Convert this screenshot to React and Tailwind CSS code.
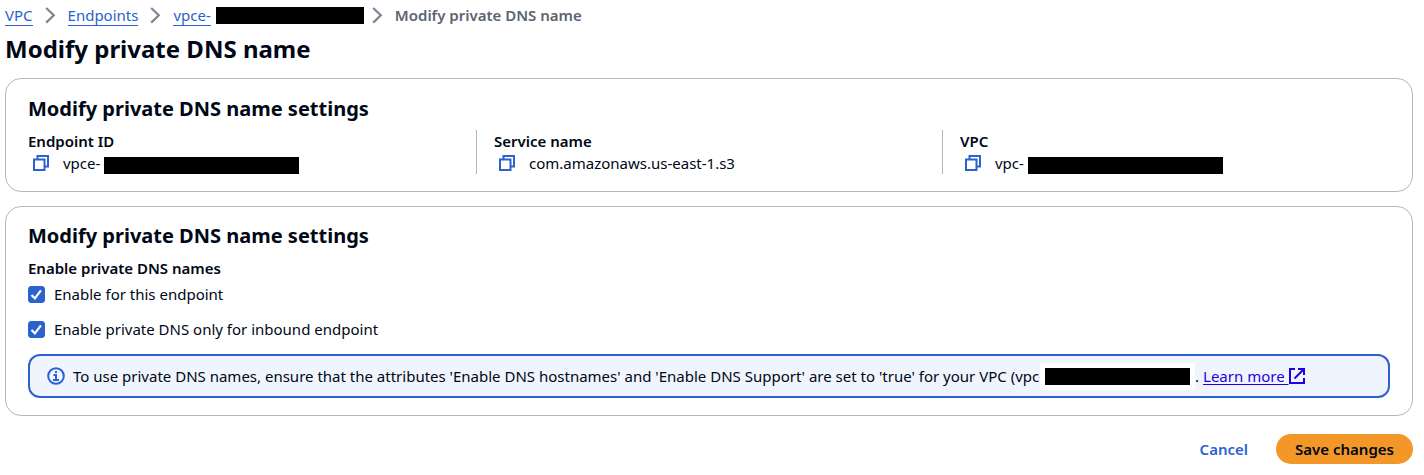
import React, { useState } from "react";

const ChevronIcon = () => (
  <svg width="11" height="17" viewBox="0 0 11 17" fill="none" aria-hidden="true" className="shrink-0">
    <path d="M1.2 1 8.8 8.3 1.2 15.6" stroke="#7d8594" strokeWidth="2.2" />
  </svg>
);

const CopyIcon = () => (
  <svg width="16" height="16" viewBox="0 0 16 16" fill="none" stroke="#2b63ce" strokeWidth="2" aria-hidden="true">
    <path d="M1 4.5h10.5V15H1z" />
    <path d="M4.5 4.5V1H15v10.5h-3.5" />
  </svg>
);

const InfoIcon = () => (
  <svg width="18" height="18" viewBox="0 0 18 18" fill="none" stroke="#2b63ce" strokeWidth="2" aria-hidden="true" className="shrink-0">
    <circle cx="9" cy="9" r="7.8" />
    <path d="M9 4v2M6.5 8H9v5M6 13h6" />
  </svg>
);

const ExternalIcon = () => (
  <svg width="16" height="16" viewBox="0 0 16 16" fill="none" stroke="currentColor" strokeWidth="2" aria-hidden="true" className="shrink-0">
    <path d="M6 1H1v14h14v-5" />
    <path d="M9 1h6v6M15 1 5.5 10.5" />
  </svg>
);

const Card = ({ title, className, children }) => (
  <section className={`rounded-2xl border border-[#b1b8c4] px-[22px] ${className}`}>
    <h2 className="text-xl font-bold leading-7">{title}</h2>
    {children}
  </section>
);

const Detail = ({ label, value, redacted }) => (
  <div className="border-l border-[#b1b8c4] px-[17px] first:border-transparent">
    <dt className="font-semibold leading-[22px]">{label}</dt>
    <dd className="flex h-[22px] items-center">
      <button type="button" aria-label={`Copy ${label}`} className="ml-[5px] mr-3.5 shrink-0">
        <CopyIcon />
      </button>
      <span>{value}</span>
      {redacted && <span className="ml-1 mt-1 h-[17px] w-[195px] bg-black" />}
    </dd>
  </div>
);

const Checkbox = ({ id, label, checked, onChange }) => (
  <div className="flex h-[22px] items-center gap-[9px]">
    <span className="relative flex h-[17px] w-[17px]">
      <input
        id={id}
        type="checkbox"
        checked={checked}
        onChange={onChange}
        className="h-[17px] w-[17px] appearance-none rounded-[3px] border border-[#2b63ce] bg-white checked:bg-[#2b63ce]"
      />
      {checked && (
        <svg viewBox="0 0 17 17" fill="none" aria-hidden="true" className="pointer-events-none absolute inset-0">
          <path d="m3.5 9 3.4 3.3 6-8" stroke="#fff" strokeWidth="2.2" />
        </svg>
      )}
    </span>
    <label htmlFor={id}>{label}</label>
  </div>
);

const App = () => {
  const [enabled, setEnabled] = useState(true);
  const [inboundOnly, setInboundOnly] = useState(true);

  const crumb = "border-b border-[#2b63ce] leading-[19px] text-[#2b63ce]";

  return (
    <main className="bg-white pl-[5px] pr-[11px] pt-[5px] font-['Noto_Sans',sans-serif] text-[15px] text-[#000716]">
      <nav aria-label="Breadcrumb" className="flex h-[21px] items-center">
        <a href="#vpc" className={crumb}>VPC</a>
        <span className="mx-3 flex"><ChevronIcon /></span>
        <a href="#endpoints" className={crumb}>Endpoints</a>
        <span className="mx-3 flex"><ChevronIcon /></span>
        <a href="#endpoint" className={crumb}>vpce-</a>
        <span className="ml-[5px] h-[17px] w-[148px] bg-black" />
        <span className="ml-2 mr-3 flex"><ChevronIcon /></span>
        <span className="font-semibold text-[#5b6472]">Modify private DNS name</span>
      </nav>

      <h1 className="mt-1.5 text-2xl font-bold leading-[34px]">Modify private DNS name</h1>

      <Card title="Modify private DNS name settings" className="mt-3 pb-[17px] pt-4">
        <dl className="-mx-[18px] mt-[7px] grid grid-cols-3">
          <Detail label="Endpoint ID" value="vpce-" redacted />
          <Detail label="Service name" value="com.amazonaws.us-east-1.s3" />
          <Detail label="VPC" value="vpc-" redacted />
        </dl>
      </Card>

      <Card title="Modify private DNS name settings" className="mt-3.5 pb-[17px] pt-[15px]">
        <fieldset className="mt-[7px]">
          <legend className="font-semibold leading-[22px]">Enable private DNS names</legend>
          <div className="mt-1 flex flex-col gap-[13px]">
            <Checkbox
              id="enable-endpoint"
              label="Enable for this endpoint"
              checked={enabled}
              onChange={(e) => setEnabled(e.target.checked)}
            />
            <Checkbox
              id="enable-inbound"
              label="Enable private DNS only for inbound endpoint"
              checked={inboundOnly}
              onChange={(e) => setInboundOnly(e.target.checked)}
            />
          </div>
        </fieldset>

        <div role="note" className="mt-3.5 flex h-11 items-center whitespace-nowrap rounded-xl border-2 border-[#2b63ce] bg-[#f0f5fd] px-[17px]">
          <InfoIcon />
          <span className="ml-2">
            To use private DNS names, ensure that the attributes 'Enable DNS hostnames' and 'Enable DNS Support' are set to 'true' for your VPC (vpc-
          </span>
          <span className="-ml-1 flex bg-white p-[5px]">
            <span className="h-[17px] w-[145px] bg-black" />
          </span>
          <span>.</span>
          <a href="#learn-more" className="ml-1 flex items-center text-[#2400e0]">
            <span className="whitespace-pre underline underline-offset-2">{"Learn more "}</span>
            <ExternalIcon />
          </a>
        </div>
      </Card>

      <div className="mt-[18px] flex justify-end gap-2">
        <button type="button" className="h-[30px] px-5 font-semibold text-[#2b63ce]">Cancel</button>
        <button type="button" className="h-[30px] rounded-full bg-[#f39729] px-[19px] font-semibold">Save changes</button>
      </div>
    </main>
  );
};

export default App;
